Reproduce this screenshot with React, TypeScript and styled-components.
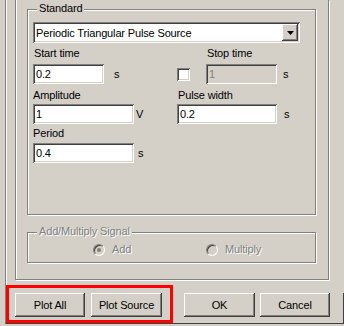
import styled, { createGlobalStyle, css } from "styled-components";

/*
 * SIGNAL SOURCE DIALOG (classic windows look)
 */

const GlobalStyle = createGlobalStyle`
  html, body {
    margin: 0;
    padding: 0;
    background: #d4d0c8;
  }
  body {
    font-family: "Liberation Sans", Arial, sans-serif;
    font-size: 11px;
    letter-spacing: -0.15px;
    color: #000;
  }
`;

const sunken = css`
  box-shadow: inset 1px 1px 0 #808080, inset -1px -1px 0 #fff,
    inset 2px 2px 0 #404040, inset -2px -2px 0 #d4d0c8;
`;

const raised = css`
  box-shadow: inset -1px -1px 0 #404040, inset 1px 1px 0 #fff,
    inset -2px -2px 0 #808080;
`;

const disabledText = css`
  color: #808080;
  text-shadow: 1px 1px 0 #fff;
`;

const App = () => {
    return (
        <>
            <GlobalStyle />
            <Screen>
                <Frame>
                    <Panel>
                        <Group $top={9} $height={206} $pad="12px 0 0 5px">
                            <GroupTitle>Standard</GroupTitle>
                            <Select>
                                <SelectText>Periodic Triangular Pulse Source</SelectText>
                                <ArrowButton>
                                    <svg width="7" height="4" viewBox="0 0 7 4">
                                        <path d="M0 0h7L3.5 4z" fill="#000" />
                                    </svg>
                                </ArrowButton>
                            </Select>

                            <Row $top={4}>
                                <Cell $w={144}><Label $indent={1}>Start time</Label></Cell>
                                <Cell><Label $indent={30}>Stop time</Label></Cell>
                            </Row>
                            <Row $top={4}>
                                <Cell $w={144}>
                                    <Field $w={71} defaultValue="0.2" />
                                    <Unit $gap={10}>s</Unit>
                                </Cell>
                                <Cell>
                                    <Check />
                                    <Field $w={71} $gap={16} defaultValue="1" disabled />
                                    <Unit $gap={6}>s</Unit>
                                </Cell>
                            </Row>

                            <Row $top={5}>
                                <Cell $w={144}><Label>Amplitude</Label></Cell>
                                <Cell><Label $indent={1}>Pulse width</Label></Cell>
                            </Row>
                            <Row $top={2}>
                                <Cell $w={144}>
                                    <Field $w={101} defaultValue="1" />
                                    <Unit $gap={2}>V</Unit>
                                </Cell>
                                <Cell>
                                    <Field $w={100} defaultValue="0.2" />
                                    <Unit $gap={7}>s</Unit>
                                </Cell>
                            </Row>

                            <Row $top={3}>
                                <Cell $w={144}><Label>Period</Label></Cell>
                            </Row>
                            <Row $top={3}>
                                <Cell $w={144}>
                                    <Field $w={101} defaultValue="0.4" />
                                    <Unit $gap={4}>s</Unit>
                                </Cell>
                            </Row>
                        </Group>

                        <Group $top={17} $height={31} $pad="10px 0 0 65px">
                            <GroupTitle $disabled>Add/Multiply Signal</GroupTitle>
                            <RadioRow>
                                <RadioItem $w={113}>
                                    <RadioCircle><RadioDot /></RadioCircle>
                                    <RadioText>Add</RadioText>
                                </RadioItem>
                                <RadioItem>
                                    <RadioCircle />
                                    <RadioText>Multiply</RadioText>
                                </RadioItem>
                            </RadioRow>
                        </Group>
                    </Panel>

                    <ButtonBar>
                        <Highlight>
                            <Button $w={70}>Plot All</Button>
                            <Button $w={71}>Plot Source</Button>
                        </Highlight>
                        <Button $w={71} $gap={11} $top={13}>OK</Button>
                        <Button $w={70} $gap={5} $top={13}>Cancel</Button>
                        <Grip />
                    </ButtonBar>
                </Frame>
            </Screen>
        </>
    );
}

const Screen = styled.div`
  width: 344px;
  height: 326px;
  overflow: hidden;
  box-sizing: border-box;
  padding-left: 5px;
  background: #d4d0c8;
`;

const Frame = styled.div`
  width: 339px;
  height: 324px;
  box-sizing: border-box;
  border-left: 1px solid #808080;
  border-bottom: 1px solid #404040;
  box-shadow: inset 1px 0 0 #fff;
  display: flex;
  flex-direction: column;
`;

const Panel = styled.div`
  margin-left: 9px;
  width: 314px;
  height: 280px;
  flex: none;
  box-sizing: border-box;
  border: 1px solid #808080;
  border-top: none;
  box-shadow: inset 1px 0 0 #fff, 1px 1px 0 #fff;
  padding-left: 11px;
  display: flex;
  flex-direction: column;
`;

/* ================= GROUP BOXES ================= */
const Group = styled.div<{ $top: number; $height: number; $pad: string }>`
  position: relative;
  margin-top: ${(p) => p.$top}px;
  width: 289px;
  height: ${(p) => p.$height}px;
  flex: none;
  box-sizing: border-box;
  border: 1px solid #808080;
  box-shadow: inset 1px 1px 0 #fff, 1px 1px 0 #fff;
  padding: ${(p) => p.$pad};
`;

const GroupTitle = styled.div<{ $disabled?: boolean }>`
  position: absolute;
  left: 9px;
  top: -8px;
  padding: 0 2px;
  line-height: 13px;
  background: #d4d0c8;
  ${(p) => p.$disabled && disabledText}
`;

/* ================= COMBO BOX ================= */
const Select = styled.div`
  width: 267px;
  height: 21px;
  box-sizing: border-box;
  padding: 2px;
  background: #fff;
  ${sunken}
  display: flex;
  align-items: center;
`;

const SelectText = styled.span`
  flex: 1;
  padding-left: 1px;
  white-space: nowrap;
  overflow: hidden;
`;

const ArrowButton = styled.span`
  width: 16px;
  height: 17px;
  background: #d4d0c8;
  ${raised}
  display: flex;
  align-items: center;
  justify-content: center;
`;

/* ================= FORM ROWS ================= */
const Row = styled.div<{ $top: number }>`
  display: flex;
  align-items: center;
  margin-top: ${(p) => p.$top}px;
`;

const Cell = styled.div<{ $w?: number }>`
  display: flex;
  align-items: center;
  width: ${(p) => (p.$w ? `${p.$w}px` : "auto")};
  flex: none;
`;

const Label = styled.div<{ $indent?: number }>`
  height: 13px;
  line-height: 13px;
  padding-left: ${(p) => p.$indent ?? 0}px;
  white-space: nowrap;
`;

const Field = styled.input<{ $w: number; $gap?: number }>`
  width: ${(p) => p.$w}px;
  height: 20px;
  margin: 0 0 0 ${(p) => p.$gap ?? 0}px;
  box-sizing: border-box;
  border: none;
  outline: none;
  padding: 0 3px;
  font-family: inherit;
  font-size: 11px;
  letter-spacing: inherit;
  color: #000;
  background: #fff;
  ${sunken}
  &:disabled {
    background: #d4d0c8;
    color: #808080;
  }
`;

const Unit = styled.span<{ $gap: number }>`
  margin-left: ${(p) => p.$gap}px;
  line-height: 13px;
`;

const Check = styled.span`
  width: 13px;
  height: 13px;
  box-sizing: border-box;
  background: #fff;
  ${sunken}
`;

/* ================= RADIOS ================= */
const RadioRow = styled.div`
  display: flex;
  align-items: center;
  height: 13px;
`;

const RadioItem = styled.div<{ $w?: number }>`
  display: flex;
  align-items: center;
  width: ${(p) => (p.$w ? `${p.$w}px` : "auto")};
`;

const RadioCircle = styled.span`
  width: 12px;
  height: 12px;
  box-sizing: border-box;
  border-radius: 50%;
  border: 1px solid;
  border-color: #808080 #fff #fff #808080;
  box-shadow: inset 1px 1px 0 #404040;
  background: #d4d0c8;
  display: flex;
  align-items: center;
  justify-content: center;
`;

const RadioDot = styled.span`
  width: 4px;
  height: 4px;
  border-radius: 50%;
  background: #808080;
`;

const RadioText = styled.span`
  margin-left: 7px;
  line-height: 13px;
  ${disabledText}
`;

/* ================= BUTTONS ================= */
const ButtonBar = styled.div`
  display: flex;
  align-items: flex-start;
  flex: 1;
`;

const Highlight = styled.div`
  margin-top: 5px;
  width: 167px;
  height: 38px;
  box-sizing: border-box;
  border: 3px solid #ff0000;
  padding: 5px 0 0 6px;
  display: flex;
  align-items: flex-start;
  gap: 6px;
`;

const Button = styled.button<{ $w: number; $gap?: number; $top?: number }>`
  width: ${(p) => p.$w}px;
  height: 24px;
  margin: ${(p) => p.$top ?? 0}px 0 0 ${(p) => p.$gap ?? 0}px;
  flex: none;
  border: none;
  padding: 0;
  font-family: inherit;
  font-size: 11px;
  letter-spacing: inherit;
  color: #000;
  background: #d4d0c8;
  ${raised}
`;

const Grip = styled.span`
  margin: 13px 0 0 auto;
  width: 1px;
  height: 30px;
  background: #404040;
`;

export default App;
